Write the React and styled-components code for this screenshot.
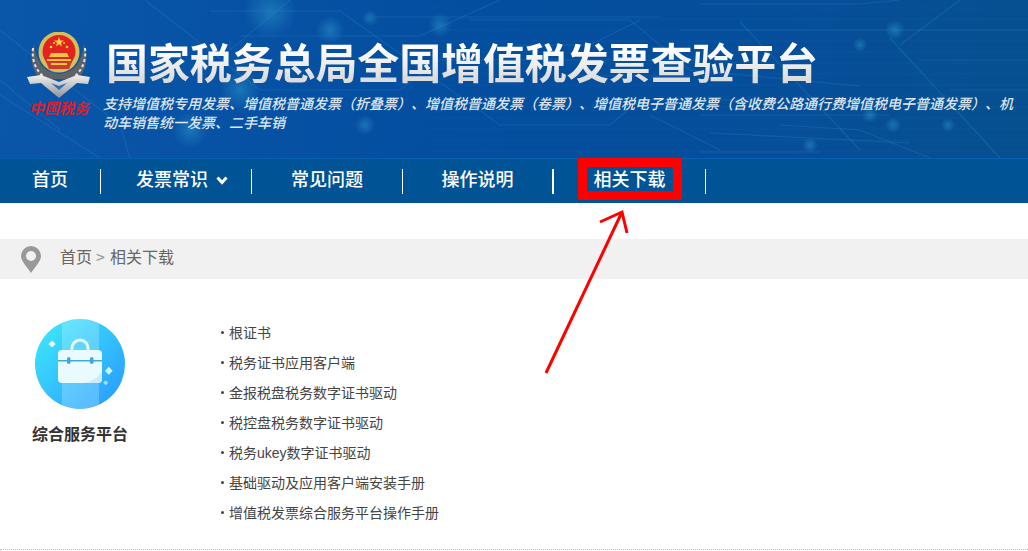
import React from 'react';
import styled, { createGlobalStyle } from 'styled-components';

const cjk = '"Noto Sans CJK SC", "Liberation Sans", sans-serif';
const latinFirst = '"Liberation Sans", "Noto Sans CJK SC", sans-serif';

const GlobalStyle = createGlobalStyle`
  html, body {
    margin: 0;
    padding: 0;
    background: #fff;
    overflow: hidden;
  }
  body {
    font-family: ${cjk};
  }
`;

const Page = styled.div`
  position: relative;
  width: 1028px;
  height: 551px;
  overflow: hidden;
`;

const Header = styled.header`
  position: relative;
  height: 158px;
  display: flex;
  align-items: flex-start;
  box-sizing: border-box;
  padding: 32px 10px 0 27px;
  gap: 12px;
  background: linear-gradient(100deg, #0a56a8 0%, #044ea0 45%, #064e9a 75%, #06508f 100%);
  overflow: hidden;
`;

const Circuit = styled.svg`
  position: absolute;
  inset: 0;
`;

const LogoColumn = styled.div`
  position: relative;
  width: 64px;
  flex: none;
  display: flex;
  flex-direction: column;
  align-items: center;
`;

const LogoText = styled.span`
  margin-top: -1px;
  font-size: 15px;
  line-height: 22px;
  font-weight: 700;
  font-style: italic;
  color: #d91f2b;
  white-space: nowrap;
`;

const TitleColumn = styled.div`
  position: relative;
  flex: 1;
  min-width: 0;
`;

const Title = styled.h1`
  margin: -1px 0 0 3px;
  font-size: 42px;
  line-height: 60px;
  font-weight: 700;
  letter-spacing: -0.12px;
  white-space: nowrap;
  background: linear-gradient(180deg, #ffffff 30%, #dcdcdc 80%);
  -webkit-background-clip: text;
  background-clip: text;
  color: transparent;
`;

const Subtitle = styled.p`
  margin: 3px 0 0;
  font-size: 14px;
  line-height: 19px;
  font-style: italic;
  font-weight: 500;
  color: #dfe6ee;
  text-spacing-trim: space-all;
`;

const Nav = styled.nav`
  height: 45px;
  display: flex;
  box-sizing: border-box;
  padding-top: 10px;
  background: #005496;
  border-top: 1px solid #0a5fb0;
`;

const NavItem = styled.a`
  position: relative;
  box-sizing: border-box;
  width: ${(p) => p.$width}px;
  height: 25px;
  padding: 0 0 8px ${(p) => p.$indent || 0}px;
  display: flex;
  align-items: center;
  justify-content: center;
  gap: 8px;
  font-size: 18px;
  font-weight: 500;
  line-height: 24px;
  color: #fff;
  border-right: ${(p) => (p.$thick ? 2 : 1)}px solid #fff;
`;

const ActiveBox = styled.span`
  position: absolute;
  left: 24px;
  top: -11px;
  width: 104px;
  height: 42px;
  box-sizing: border-box;
  border: 9px solid #ff0000;
`;

const Crumbs = styled.div`
  margin-top: 36px;
  height: 40px;
  display: flex;
  align-items: center;
  box-sizing: border-box;
  padding-left: 21px;
  background: #f1f1f1;
  font-size: 16px;
  color: #666;
`;

const CrumbTrail = styled.span`
  margin: 0 0 7px 19px;
`;

const CrumbSep = styled.span`
  color: #999;
  margin: 0 5px 0 4px;
`;

const Body = styled.main`
  height: 271px;
  box-sizing: border-box;
  display: flex;
  padding: 40px 0 0 32px;
  border-bottom: 1px dotted #bbb;
`;

const Platform = styled.div`
  width: 96px;
  display: flex;
  flex-direction: column;
  align-items: center;
`;

const PlatformName = styled.div`
  margin-top: 12px;
  font-size: 16px;
  line-height: 24px;
  font-weight: 700;
  color: #333;
  white-space: nowrap;
`;

const Links = styled.ul`
  list-style: none;
  margin: -2px 0 0 93px;
  padding: 0;
`;

const LinkItem = styled.li`
  display: flex;
  align-items: center;
  height: 30px;
  font-family: ${latinFirst};
  font-size: 14px;
  color: #444;
  &::before {
    content: '';
    width: 3px;
    height: 3px;
    margin-right: 5px;
    border-radius: 50%;
    background: #444;
  }
`;

const Arrow = styled.svg`
  position: absolute;
  left: 540px;
  top: 205px;
`;

// circuit board traces behind the title
const traces = [
  'M0 30 L120 125 L130 158', 'M145 0 L260 90 L400 90 L440 60 L700 60',
  'M210 11 L340 11 L500 125 L610 125 L640 100 L760 100',
  'M290 0 L230 50 L230 40', 'M240 36 L420 36 L500 0', 'M375 17 L560 17 L660 17',
  'M470 20 L630 20 L690 70 L860 86', 'M700 4 L860 4 L900 0', 'M900 45 L960 0',
  'M680 30 L860 30 L960 30 L1028 30', 'M740 22 L860 150', 'M890 38 L1000 158',
  'M0 95 L100 158', 'M700 115 L890 115', 'M710 133 L910 143', 'M700 152 L820 152',
  'M780 125 L860 130 L930 158', 'M560 76 L690 76', 'M510 45 L590 45 L640 20',
  'M650 115 L720 150', 'M0 80 L60 130', 'M920 60 L1028 60', 'M950 90 L1028 90',
];

const glows = [
  [270, 12, 26], [330, 30, 14], [240, 90, 20], [190, 130, 18], [370, 18, 8],
  [365, 125, 10], [893, 125, 8], [895, 30, 10], [870, 115, 8], [948, 125, 7],
  [860, 45, 7], [810, 145, 8], [440, 25, 12],
];

const CircuitArt = () => (
  <Circuit width="1028" height="158" viewBox="0 0 1028 158">
    <defs>
      <radialGradient id="glow">
        <stop offset="0" stopColor="#2f98cc" stopOpacity="0.5" />
        <stop offset="1" stopColor="#2f98cc" stopOpacity="0" />
      </radialGradient>
    </defs>
    {Array.from({ length: 14 }, (_, i) => (
      <line key={i} x1="430" x2="1028" y1={8 + i * 11} y2={8 + i * 11} stroke="#2a78c0" strokeOpacity="0.14" />
    ))}
    {traces.map((d) => (
      <path key={d} d={d} fill="none" stroke="#2a84c4" strokeOpacity="0.3" strokeWidth="1.2" />
    ))}
    {glows.map(([x, y, r]) => (
      <circle key={`${x}-${y}`} cx={x} cy={y} r={r} fill="url(#glow)" />
    ))}
  </Circuit>
);

const Emblem = () => (
  <svg width="64" height="66" viewBox="0 0 64 66">
    <defs>
      <linearGradient id="silver" x1="0" y1="0" x2="0" y2="1">
        <stop offset="0" stopColor="#f0f0f0" />
        <stop offset="1" stopColor="#8f9294" />
      </linearGradient>
    </defs>
    <path d="M7 12 Q0 32 13 47 L51 47 Q64 32 57 12 Q54 40 32 42 Q10 40 7 12Z" fill="#5d6367" />
    <g stroke="#e4e4e4" strokeWidth="2" strokeDasharray="3 2.5" fill="none">
      <path d="M6 16 Q4 34 17 45" />
      <path d="M58 16 Q60 34 47 45" />
    </g>
    <circle cx="32" cy="20" r="20.5" fill="#d6bf58" />
    <circle cx="32" cy="19.5" r="16.5" fill="#e3231f" />
    <polygon points="32,5 33.2,8.6 37,8.6 34,10.8 35,14.4 32,12.2 29,14.4 30,10.8 27,8.6 30.8,8.6" fill="#f6d640" />
    <circle cx="24" cy="15" r="1.3" fill="#f6d640" />
    <circle cx="40" cy="15" r="1.3" fill="#f6d640" />
    <circle cx="27" cy="11" r="1" fill="#f6d640" />
    <circle cx="37" cy="11" r="1" fill="#f6d640" />
    <path d="M22 25 L42 25 L40 21 L24 21Z M20 27 H44 V29 H20Z" fill="#f3c63d" />
    <path d="M19 30 H45 L42 37 H22Z" fill="#cf3a2a" />
    <rect x="24" y="31" width="16" height="2" fill="#f3c63d" />
    <path d="M0 45 L14 43 L32 50 L50 43 L63 45 L61 52 L50 51 L32 66 L14 51 L3 52Z" fill="url(#silver)" />
    <path d="M24 51 L32 54 L40 51 L32 58Z" fill="#2b6fb5" />
  </svg>
);

const Briefcase = () => (
  <svg width="90" height="90" viewBox="0 0 90 90">
    <defs>
      <linearGradient id="disc" x1="0.1" y1="0.1" x2="0.9" y2="0.9">
        <stop offset="0" stopColor="#3de4fb" />
        <stop offset="1" stopColor="#2a9fff" />
      </linearGradient>
      <clipPath id="discClip">
        <circle cx="45" cy="45" r="45" />
      </clipPath>
    </defs>
    <circle cx="45" cy="45" r="45" fill="url(#disc)" />
    <rect x="27" y="0" width="37" height="90" fill="#ffffff" fillOpacity="0.22" clipPath="url(#discClip)" />
    <path d="M37 32 V29 A8 8 0 0 1 53 29 V32" fill="none" stroke="#e8fbff" strokeWidth="3" />
    <rect x="23" y="31" width="44" height="33" rx="4" fill="#e9fbff" />
    <path d="M48 64 H63 A4 4 0 0 0 67 60 V52 Q62 62 48 64Z" fill="#cdeaf7" />
    <rect x="23" y="41" width="44" height="1.5" fill="#42a8d8" />
    <rect x="32" y="38" width="3.5" height="7" rx="1.75" fill="#42a8d8" />
    <rect x="55" y="38" width="3.5" height="7" rx="1.75" fill="#42a8d8" />
    <rect x="14.5" y="22.5" width="5" height="5" transform="rotate(45 17 25)" fill="#eafcff" />
    <rect x="71" y="49" width="5.5" height="5.5" transform="rotate(45 73.75 51.75)" fill="#cdf3ff" />
    <rect x="69" y="62" width="3.5" height="3.5" transform="rotate(45 70.75 63.75)" fill="#9fe0ff" />
  </svg>
);

const ChevronMark = styled.svg`
  margin-top: 5px;
`;

const Chevron = () => (
  <ChevronMark width="12" height="9" viewBox="0 0 12 9">
    <path d="M1.5 1.5 L6 6.5 L10.5 1.5" fill="none" stroke="#fff" strokeWidth="3" />
  </ChevronMark>
);

const Pin = () => (
  <svg width="20" height="27" viewBox="0 0 20 27">
    <path
      fillRule="evenodd"
      d="M10 0 A10 10 0 0 1 20 10 C20 15 14 21 10 27 C6 21 0 15 0 10 A10 10 0 0 1 10 0Z M10 5 A5 5 0 1 0 10 15 A5 5 0 1 0 10 5Z"
      fill="#999"
    />
  </svg>
);

const links = [
  '根证书',
  '税务证书应用客户端',
  '金报税盘税务数字证书驱动',
  '税控盘税务数字证书驱动',
  '税务ukey数字证书驱动',
  '基础驱动及应用客户端安装手册',
  '增值税发票综合服务平台操作手册',
];

const App = () => (
  <Page>
    <GlobalStyle />
    <Header>
      <CircuitArt />
      <LogoColumn>
        <Emblem />
        <LogoText>中国税务</LogoText>
      </LogoColumn>
      <TitleColumn>
        <Title>国家税务总局全国增值税发票查验平台</Title>
        <Subtitle>
          支持增值税专用发票、增值税普通发票（折叠票）、增值税普通发票（卷票）、增值税电子普通发票（含收费公路通行费增值税电子普通发票）、机动车销售统一发票、二手车销
        </Subtitle>
      </TitleColumn>
    </Header>
    <Nav>
      <NavItem $width={101}>首页</NavItem>
      <NavItem $width={151} $indent={12}>发票常识<Chevron /></NavItem>
      <NavItem $width={151}>常见问题</NavItem>
      <NavItem $width={151} $thick>操作说明</NavItem>
      <NavItem $width={152}>相关下载<ActiveBox /></NavItem>
    </Nav>
    <Crumbs>
      <Pin />
      <CrumbTrail>首页<CrumbSep>&gt;</CrumbSep>相关下载</CrumbTrail>
    </Crumbs>
    <Body>
      <Platform>
        <Briefcase />
        <PlatformName>综合服务平台</PlatformName>
      </Platform>
      <Links>
        {links.map((l) => (
          <LinkItem key={l}>{l}</LinkItem>
        ))}
      </Links>
    </Body>
    <Arrow width="100" height="175" viewBox="0 0 100 175">
      <path d="M6 168 L82 7 M60 17 L82 7 L87 28" fill="none" stroke="#ff0000" strokeWidth="3" />
    </Arrow>
  </Page>
);

export default App;
